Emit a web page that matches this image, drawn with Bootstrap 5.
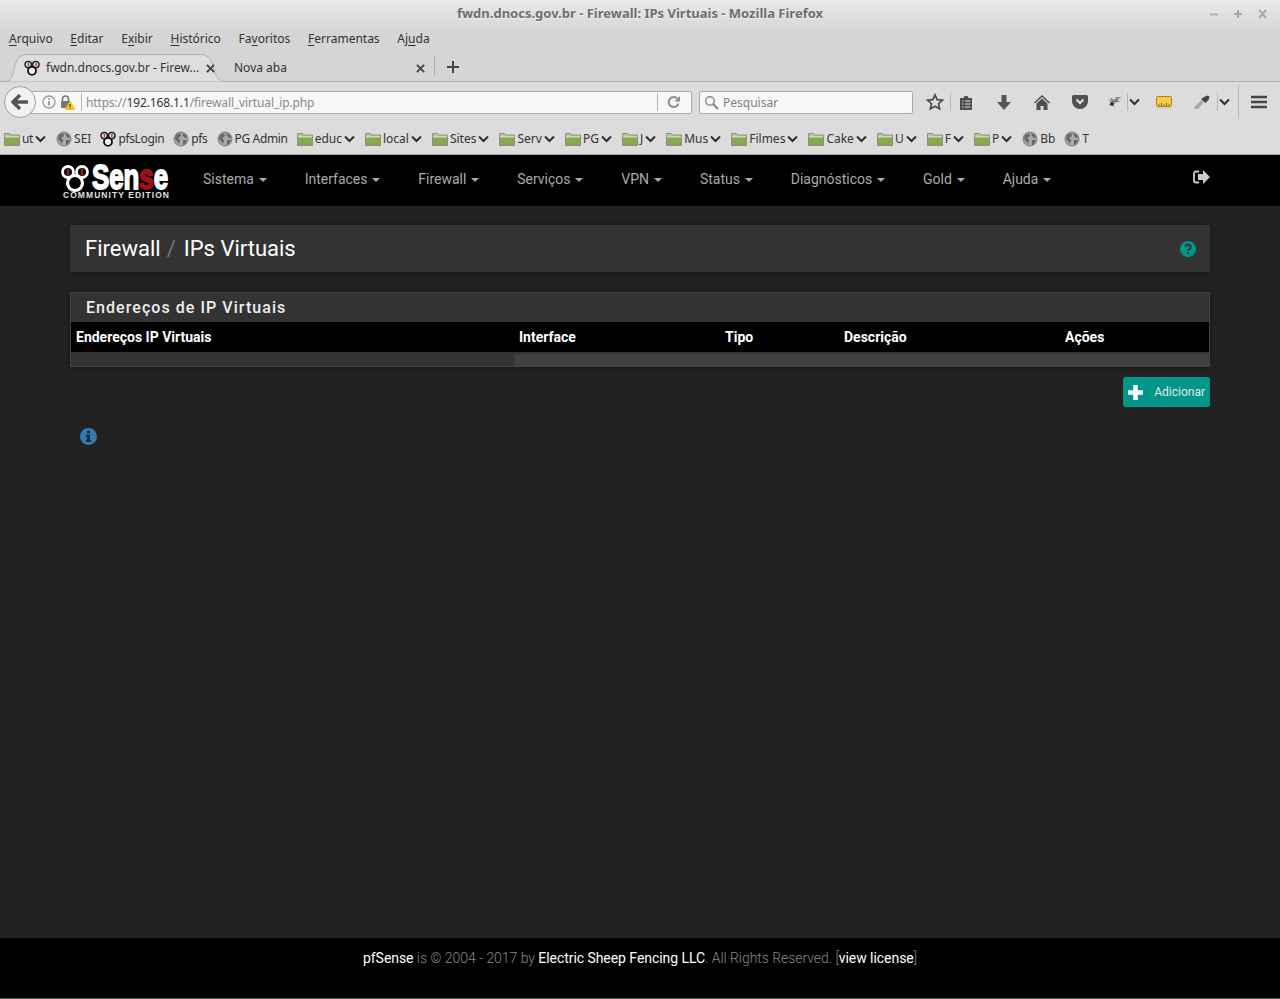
<!DOCTYPE html>
<html lang="pt-BR">

<head>
    <meta charset="UTF-8">
    <meta name="viewport" content="width=device-width, initial-scale=1.0">
    <title>fwdn.dnocs.gov.br - Firewall: IPs Virtuais</title>
    <link href="https://cdn.jsdelivr.net/npm/bootstrap@5.3.0/dist/css/bootstrap.min.css" rel="stylesheet">
    <style>
        body {
            min-height: 999px;
            background: #222;
            font-family: Roboto, "Liberation Sans", sans-serif;
            font-size: 14px;
            color: #bbb;
            overflow: hidden;
        }

        /* browser chrome */
        .ff-chrome {
            height: 155px;
            background: linear-gradient(#e9e9e9 0, #d5d5d5 34px, #d5d5d5 81px, #dcdcdc 82px);
            border-bottom: 1px solid #a3a3a3;
            font-family: "Noto Sans", sans-serif;
            font-size: 12px;
            color: #333;
        }

        .ff-title {
            height: 28px;
            font-size: 13px;
            font-weight: 700;
            color: #6e6e6e;
            text-shadow: 0 1px 0 #f2f2f2;
        }

        .ff-winbtns {
            right: 11px;
            top: 8px;
        }

        .ff-menu {
            height: 22px;
            padding-left: 9px;
            gap: 17.7px;
        }

        .ff-menu u {
            text-underline-offset: 2px;
        }

        .ff-tabs {
            height: 32px;
            border-bottom: 1px solid #adadad;
        }

        .ff-tab-on {
            width: 214px;
            height: 28px;
            margin-left: 14px;
            padding-left: 10px;
            padding-top: 2px;
        }

        .ff-tab-on svg.ff-tabshape {
            left: -14px;
            top: 0;
        }

        .ff-tab-on>*:not(.ff-tabshape) {
            position: relative;
        }

        .ff-tabtext {
            margin-left: 6px;
        }

        .ff-tabx {
            margin-right: 13px;
        }

        .ff-tab-off {
            width: 191px;
            height: 28px;
            margin-left: 6px;
            padding-top: 2px;
        }

        .ff-tabsep {
            width: 1px;
            height: 21px;
            background: #b0b0b0;
            margin-left: 9px;
        }

        .ff-plus {
            margin: 2px 0 0 8px;
        }

        .ff-nav {
            height: 40px;
            padding-left: 4px;
        }

        .ff-back {
            width: 32px;
            height: 32px;
            border: 1px solid #a0a0a0;
            border-radius: 50%;
            background: #f2f2f2;
            position: relative;
            z-index: 1;
        }

        .ff-url {
            width: 672px;
            height: 23px;
            margin-left: -16px;
            padding-left: 21px;
            background: #f7f7f7;
            border: 1px solid #ababab;
            border-radius: 2px;
            font-size: 12px;
            letter-spacing: -0.12px;
            color: #8a8a8a;
        }

        .ff-url b {
            font-weight: 400;
            color: #333;
        }

        .ff-lock {
            margin-left: 4px;
        }

        .ff-urlsep {
            margin-left: 6px;
        }

        .ff-urltext {
            margin-left: 4px;
            padding-top: 2px;
        }

        .ff-reload {
            margin: 0 10px 0 9px;
        }

        .ff-sep {
            width: 1px;
            height: 18px;
            background: #b5b5b5;
            flex: none;
        }

        .ff-sep-tall {
            height: 34px;
        }

        .ff-search {
            width: 214px;
            height: 23px;
            margin-left: 7px;
            padding-left: 4px;
            background: #f7f7f7;
            border: 1px solid #ababab;
            border-radius: 2px;
            color: #808080;
        }

        .ff-searchtext {
            margin-left: 4px;
            padding-top: 2px;
        }

        .ff-star {
            margin: 0 6px 0 13px;
        }

        .ff-ico {
            height: 24px;
            flex: none;
        }

        .w-30 { width: 30px; }
        .w-38 { width: 38px; }
        .w-28 { width: 28px; }
        .w-34 { width: 34px; }
        .w-12 { width: 12px; }
        .w-40 { width: 40px; }

        .ff-ruler {
            margin-left: 5px;
        }

        .ff-marks {
            height: 32px;
            padding: 2px 0 0 4px;
        }

        .ff-mark {
            gap: 2px;
            margin-right: 9px;
        }

        .ff-mark.ff-folder {
            margin-right: 10px;
        }

        .ff-tight {
            letter-spacing: -0.35px;
        }

        /* pfSense page */
        .container {
            max-width: 1170px;
            padding-left: 15px;
            padding-right: 15px;
        }

        .pf-navbar {
            height: 51px;
            padding: 0;
            background: #000;
        }

        .pf-navbar .pf-brand {
            margin: 0 10px 0 -10px;
            padding: 0;
            line-height: 0;
        }

        .pf-navbar .navbar-nav .nav-link {
            padding: 14px 19px 17px;
            font-size: 14px;
            line-height: 20px;
            color: #aaa;
        }

        .pf-navbar .dropdown-toggle::after {
            margin-left: 4.8px;
            vertical-align: 2px;
            border-top-width: 4px;
            border-left-width: 4px;
            border-right-width: 4px;
        }

        .pf-logout {
            margin-bottom: 7px;
        }

        .pf-crumbs {
            height: 47px;
            margin-top: 19px;
            padding: 0 14px 0 15px;
            background: #333;
            box-shadow: 0 1px 5px rgba(0, 0, 0, .4);
        }

        .pf-crumbs .breadcrumb {
            font-size: 22px;
            line-height: 47px;
        }

        .pf-crumbs .breadcrumb-item,
        .pf-crumbs .breadcrumb-item a {
            color: #fff;
            text-decoration: none;
        }

        .pf-crumbs .breadcrumb-item+.breadcrumb-item {
            padding-left: 6px;
        }

        .pf-crumbs .breadcrumb-item+.breadcrumb-item::before {
            color: #777;
            padding-right: 8px;
        }

        .pf-panel {
            margin-top: 20px;
            background: #333;
            border: 1px solid #444;
            border-radius: 0;
            box-shadow: 0 1px 4px rgba(0, 0, 0, .35);
        }

        .pf-panel .card-header {
            height: 29px;
            padding: 0 15px;
            background: #333;
            border: 0;
            border-radius: 0;
            font-size: 16px;
            font-weight: 500;
            line-height: 29px;
            letter-spacing: 1.05px;
            color: #eee;
        }

        .pf-panel .table {
            table-layout: fixed;
            margin: 0;
            --bs-table-bg: transparent;
        }

        .pf-col-addr { width: 443px; }
        .pf-col-if { width: 206px; }
        .pf-col-type { width: 119px; }
        .pf-col-desc { width: 221px; }

        .pf-panel th {
            height: 30px;
            padding: 0 5px;
            background: #000;
            border: 0;
            font-size: 14px;
            font-weight: 700;
            line-height: 30px;
            color: #fff;
        }

        .pf-panel td {
            height: 13px;
            padding: 0;
            border: 0;
            border-top: 2px solid #333;
        }

        .pf-panel td.pf-cell-r {
            background: #404040;
        }

        .pf-add {
            width: 87px;
            height: 30px;
            margin-top: 10px;
            padding: 0 5px;
            background: #009688;
            border: 0;
            border-radius: 3px;
            font-size: 12px;
            color: #e6e6e6;
        }

        .pf-add:hover {
            background: #009688;
            color: #e6e6e6;
        }

        .pf-info {
            margin-top: 21px;
            padding-left: 10px;
            line-height: 0;
        }

        .pf-footer {
            height: 61px;
            padding-top: 10px;
            background: #000;
            border-bottom: 1px solid #555;
            font-size: 14px;
            font-weight: 300;
            line-height: 20px;
            letter-spacing: -0.05px;
            color: #888;
        }

        .pf-footer a {
            color: #fff;
            font-weight: 400;
            text-decoration: none;
        }
    </style>
</head>

<body class="d-flex flex-column">

    <!-- shared icons -->
    <svg width="0" height="0" class="position-absolute">
        <symbol id="i-folder" viewBox="0 0 16 14">
            <path d="M0.5 1.5h5l1 1.5h9v10.5h-15z" fill="#bdbdb2" stroke="#8f8f86" />
            <rect x="1" y="4.5" width="14" height="8.5" fill="#86a94f" />
            <rect x="1" y="4" width="14" height="1.5" fill="#cfd8b8" />
        </symbol>
        <symbol id="i-globe" viewBox="0 0 16 16">
            <circle cx="8" cy="8" r="7" fill="#a8a8a8" stroke="#7d7d7d" />
            <path d="M3 4l4-2 1 3-3 2 2 2-1 4-2-3-2-2zM9 2l4 2 1 3-2 0-2-2zM10 9l4 0-2 4-2 1z" fill="#666" />
        </symbol>
        <symbol id="i-chev" viewBox="0 0 11 8">
            <path d="M1 1.5l4.5 4.5 4.5-4.5" fill="none" stroke="#2e2e2e" stroke-width="2" />
        </symbol>
        <symbol id="i-rings" viewBox="0 0 16 16">
            <circle cx="4.2" cy="4.6" r="3.2" fill="#eee" stroke="#222" stroke-width="1.5" />
            <circle cx="11.8" cy="4.6" r="3.2" fill="#eee" stroke="#222" stroke-width="1.5" />
            <circle cx="8" cy="10.8" r="4" fill="#eee" stroke="#111" stroke-width="1.8" />
            <rect x="3.6" y="3" width="1.4" height="3" fill="#b22" />
            <rect x="11.2" y="3" width="1.4" height="3" fill="#b22" />
        </symbol>
        <symbol id="i-x" viewBox="0 0 10 10">
            <path d="M1 1l8 8M9 1l-8 8" stroke="#444" stroke-width="2.2" />
        </symbol>
    </svg>

    <!-- Firefox window -->
    <div class="ff-chrome flex-shrink-0">
        <div class="ff-title position-relative d-flex align-items-center justify-content-center">
            fwdn.dnocs.gov.br - Firewall: IPs Virtuais - Mozilla Firefox
            <svg class="ff-winbtns position-absolute" width="60" height="12" viewBox="0 0 60 12">
                <path d="M1 6.5h8" stroke="#b0b0b0" stroke-width="2" />
                <path d="M25 6h8M29 2v8" stroke="#a8a8a8" stroke-width="2" />
                <path d="M50 2l7 8M57 2l-7 8" stroke="#a8a8a8" stroke-width="2" />
            </svg>
        </div>
        <div class="ff-menu d-flex align-items-center">
            <span><u>A</u>rquivo</span>
            <span><u>E</u>ditar</span>
            <span>E<u>x</u>ibir</span>
            <span><u>H</u>istórico</span>
            <span>Fa<u>v</u>oritos</span>
            <span><u>F</u>erramentas</span>
            <span>Aj<u>u</u>da</span>
        </div>
        <div class="ff-tabs d-flex align-items-end">
            <div class="ff-tab-on position-relative d-flex align-items-center">
                <svg class="ff-tabshape position-absolute" width="240" height="29" viewBox="0 0 240 29">
                    <path d="M0 28.5h4c6 0 8-3 10-12 2-10 5-15 14-15h172c9 0 11 5 14 15 2 8 5 12 12 12h14" fill="#dedede" stroke="#adadad" />
                </svg>
                <svg width="16" height="16"><use href="#i-rings" /></svg>
                <span class="ff-tabtext text-nowrap">fwdn.dnocs.gov.br - Firew...</span>
                <svg class="ff-tabx ms-auto" width="9" height="9"><use href="#i-x" /></svg>
            </div>
            <div class="ff-tab-off d-flex align-items-center">
                <span>Nova aba</span>
                <svg class="ms-auto" width="9" height="9"><use href="#i-x" /></svg>
            </div>
            <span class="ff-tabsep align-self-center"></span>
            <svg class="ff-plus align-self-center" width="20" height="14" viewBox="0 0 20 14">
                <path d="M4 7h12M10 1v12" stroke="#444" stroke-width="2" />
            </svg>
        </div>
        <div class="ff-nav d-flex align-items-center">
            <div class="ff-back d-flex align-items-center justify-content-center flex-shrink-0">
                <svg width="18" height="16" viewBox="0 0 18 16">
                    <path d="M9 1L2 8l7 7M2.5 8H17" fill="none" stroke="#555" stroke-width="3.4" />
                </svg>
            </div>
            <div class="ff-url d-flex align-items-center flex-shrink-0">
                <svg class="flex-shrink-0" width="14" height="14" viewBox="0 0 14 14">
                    <circle cx="7" cy="7" r="6" fill="none" stroke="#999" stroke-width="1.3" />
                    <path d="M7 6v4.5M7 3.2v1.6" stroke="#888" stroke-width="1.6" />
                </svg>
                <svg class="ff-lock flex-shrink-0" width="15" height="15" viewBox="0 0 15 15">
                    <path d="M2.5 6V4a3 3 0 016 0v2" fill="none" stroke="#777" stroke-width="1.6" />
                    <rect x="1" y="6" width="9" height="7" rx="1" fill="#777" />
                    <path d="M10 6l5 8.5H5z" fill="#fc0" stroke="#e0a800" stroke-width=".5" />
                    <path d="M10 9v3M10 12.6v1" stroke="#333" stroke-width="1" />
                </svg>
                <span class="ff-sep ff-urlsep"></span>
                <span class="ff-urltext">https://<b>192.168.1.1</b>/firewall_virtual_ip.php</span>
                <span class="ff-sep ms-auto"></span>
                <svg class="ff-reload flex-shrink-0" width="14" height="14" viewBox="0 0 14 14">
                    <path d="M11.5 8.5a5 5 0 11-1.2-5" fill="none" stroke="#8c8c8c" stroke-width="2" />
                    <path d="M13 1v5.500H7.500z" fill="#8c8c8c" />
                </svg>
            </div>
            <div class="ff-search d-flex align-items-center flex-shrink-0">
                <svg class="flex-shrink-0" width="15" height="15" viewBox="0 0 15 15">
                    <circle cx="6" cy="6" r="4.2" fill="none" stroke="#8a8a8a" stroke-width="1.5" />
                    <path d="M9 9l5 5" stroke="#8a8a8a" stroke-width="2.2" />
                </svg>
                <span class="ff-searchtext">Pesquisar</span>
            </div>
            <svg class="ff-star flex-shrink-0" width="18" height="18" viewBox="0 0 18 18">
                <path d="M9 1.8l2.2 4.8 5.2.6-3.9 3.500 1.100 5.200L9 13.300l-4.600 2.600 1.100-5.200-3.900-3.500 5.200-.6z" fill="none" stroke="#4a4a4a" stroke-width="1.7" />
            </svg>
            <span class="ff-sep"></span>
            <div class="ff-ico w-30 d-flex align-items-center justify-content-center">
                <svg width="14" height="15" viewBox="0 0 14 15">
                    <path d="M1 3h3.500l1-2h3l1 2H13v12H1z" fill="#4d4d4d" />
                    <path d="M3 6h1.500M6 6h5.500M3 9h1.500M6 9h5.500M3 12h1.500M6 12h5.500" stroke="#ddd" stroke-width="1.2" />
                </svg>
            </div>
            <div class="ff-ico w-38 ms-1 d-flex align-items-center justify-content-center">
                <svg width="14" height="15" viewBox="0 0 14 15">
                    <path d="M4.500 0h5v7H14l-7 8-7-8h4.500z" fill="#555" />
                </svg>
            </div>
            <div class="ff-ico w-38 d-flex align-items-center justify-content-center">
                <svg width="16" height="15" viewBox="0 0 16 15">
                    <path d="M8 0L0 7.500l1 1L8 2l7 6.500 1-1z" fill="#505050" />
                    <path d="M8 3.500l-5.500 5V15H6.500v-4h3v4h4V8.500z" fill="#505050" />
                </svg>
            </div>
            <div class="ff-ico w-38 d-flex align-items-center justify-content-center">
                <svg width="16" height="14" viewBox="0 0 16 14">
                    <path d="M1.500 0h13A1.500 1.500 0 0116 1.500V6A8 8 0 010 6V1.500A1.500 1.500 0 011.500 0z" fill="#505050" />
                    <path d="M4.500 4.500L8 8l3.500-3.500" fill="none" stroke="#e6e6e6" stroke-width="2" />
                </svg>
            </div>
            <div class="ff-ico w-28 ps-1 d-flex align-items-center justify-content-center">
                <svg width="16" height="13" viewBox="0 0 15 13">
                    <path d="M1 3l4 2 4-4 5 0-4 3 3 2-5 0-2 3 2 3-4-3-3 1 2-3z" fill="#8f8f8f" />
                    <circle cx="4.500" cy="8" r="1.800" fill="#222" />
                    <path d="M9 3l1 1M7 5l2 1M4 2l1 3" stroke="#444" />
                </svg>
            </div>
            <span class="ff-sep"></span>
            <div class="ff-ico w-12 d-flex align-items-center justify-content-center">
                <svg width="11" height="8"><use href="#i-chev" /></svg>
            </div>
            <div class="ff-ico w-38 ff-ruler d-flex align-items-center justify-content-center">
                <svg width="16" height="13" viewBox="0 0 16 13">
                    <rect x=".5" y=".5" width="15" height="10" rx="1" fill="#f7c948" stroke="#a98320" />
                    <path d="M3 10.500V8M5.500 10.500V7M8 10.500V8M10.500 10.500V7M13 10.500V8" stroke="#8a6a1a" />
                    <path d="M1 12.500h14" stroke="#c9c9c9" />
                </svg>
            </div>
            <div class="ff-ico w-34 ps-1 d-flex align-items-center justify-content-center">
                <svg width="18" height="15" viewBox="0 0 18 15">
                    <path d="M1 14l1-3L9 5l2 2-6 7z" fill="#a8a8a8" />
                    <path d="M8 4l4-2.500 3-1 1.500 1.500-1 3-3 3z" fill="#444" />
                </svg>
            </div>
            <span class="ff-sep"></span>
            <div class="ff-ico w-12 d-flex align-items-center justify-content-center">
                <svg width="11" height="8"><use href="#i-chev" /></svg>
            </div>
            <span class="ff-sep ff-sep-tall ms-2"></span>
            <div class="ff-ico w-40 d-flex align-items-center justify-content-center">
                <svg width="16" height="14" viewBox="0 0 16 14">
                    <path d="M0 2h16M0 7h16M0 12h16" stroke="#444" stroke-width="2.600" />
                </svg>
            </div>
        </div>
        <div class="ff-marks d-flex align-items-center text-nowrap">
            <div class="ff-mark ff-folder d-flex align-items-center"><svg width="16" height="14"><use href="#i-folder" /></svg><span class="ff-tight">ut</span><svg width="11" height="8"><use href="#i-chev" /></svg></div>
            <div class="ff-mark d-flex align-items-center"><svg width="16" height="16"><use href="#i-globe" /></svg><span>SEI</span></div>
            <div class="ff-mark d-flex align-items-center"><svg width="16" height="16"><use href="#i-rings" /></svg><span class="ff-tight">pfsLogin</span></div>
            <div class="ff-mark d-flex align-items-center"><svg width="16" height="16"><use href="#i-globe" /></svg><span class="ff-tight">pfs</span></div>
            <div class="ff-mark d-flex align-items-center"><svg width="16" height="16"><use href="#i-globe" /></svg><span class="ff-tight">PG Admin</span></div>
            <div class="ff-mark ff-folder d-flex align-items-center"><svg width="16" height="14"><use href="#i-folder" /></svg><span>educ</span><svg width="11" height="8"><use href="#i-chev" /></svg></div>
            <div class="ff-mark ff-folder d-flex align-items-center"><svg width="16" height="14"><use href="#i-folder" /></svg><span>local</span><svg width="11" height="8"><use href="#i-chev" /></svg></div>
            <div class="ff-mark ff-folder d-flex align-items-center"><svg width="16" height="14"><use href="#i-folder" /></svg><span>Sites</span><svg width="11" height="8"><use href="#i-chev" /></svg></div>
            <div class="ff-mark ff-folder d-flex align-items-center"><svg width="16" height="14"><use href="#i-folder" /></svg><span>Serv</span><svg width="11" height="8"><use href="#i-chev" /></svg></div>
            <div class="ff-mark ff-folder d-flex align-items-center"><svg width="16" height="14"><use href="#i-folder" /></svg><span>PG</span><svg width="11" height="8"><use href="#i-chev" /></svg></div>
            <div class="ff-mark ff-folder d-flex align-items-center"><svg width="16" height="14"><use href="#i-folder" /></svg><span>J</span><svg width="11" height="8"><use href="#i-chev" /></svg></div>
            <div class="ff-mark ff-folder d-flex align-items-center"><svg width="16" height="14"><use href="#i-folder" /></svg><span>Mus</span><svg width="11" height="8"><use href="#i-chev" /></svg></div>
            <div class="ff-mark ff-folder d-flex align-items-center"><svg width="16" height="14"><use href="#i-folder" /></svg><span>Filmes</span><svg width="11" height="8"><use href="#i-chev" /></svg></div>
            <div class="ff-mark ff-folder d-flex align-items-center"><svg width="16" height="14"><use href="#i-folder" /></svg><span>Cake</span><svg width="11" height="8"><use href="#i-chev" /></svg></div>
            <div class="ff-mark ff-folder d-flex align-items-center"><svg width="16" height="14"><use href="#i-folder" /></svg><span>U</span><svg width="11" height="8"><use href="#i-chev" /></svg></div>
            <div class="ff-mark ff-folder d-flex align-items-center"><svg width="16" height="14"><use href="#i-folder" /></svg><span>F</span><svg width="11" height="8"><use href="#i-chev" /></svg></div>
            <div class="ff-mark ff-folder d-flex align-items-center"><svg width="16" height="14"><use href="#i-folder" /></svg><span>P</span><svg width="11" height="8"><use href="#i-chev" /></svg></div>
            <div class="ff-mark d-flex align-items-center"><svg width="16" height="16"><use href="#i-globe" /></svg><span>Bb</span></div>
            <div class="ff-mark d-flex align-items-center"><svg width="16" height="16"><use href="#i-globe" /></svg><span>T</span></div>
        </div>
    </div>

    <!-- pfSense navbar -->
    <nav class="navbar navbar-expand pf-navbar flex-shrink-0">
        <div class="container">
            <a class="navbar-brand pf-brand" href="#">
                <svg width="114" height="50" viewBox="0 0 114 50">
                    <circle cx="8" cy="16" r="5.500" fill="#111" stroke="#fff" stroke-width="2.800" />
                    <circle cx="22" cy="16" r="5.500" fill="#111" stroke="#fff" stroke-width="2.800" />
                    <circle cx="15" cy="27" r="7.500" fill="#000" stroke="#fff" stroke-width="3.200" />
                    <rect x="7" y="13" width="2" height="6" fill="#a11" />
                    <rect x="21" y="13" width="2" height="6" fill="#a11" />
                    <text transform="translate(32 33) scale(.717 1)" font-family="Liberation Sans" font-weight="700" font-size="36" fill="#fff" stroke="#fff" stroke-width="1.800">Sen<tspan fill="#a01010" stroke="#a01010">s</tspan>e</text>
                    <text x="3" y="42" font-family="Liberation Sans" font-weight="700" font-size="8.500" fill="#e2e2e2" textLength="106" lengthAdjust="spacing">COMMUNITY EDITION</text>
                </svg>
            </a>
            <ul class="navbar-nav">
                <li class="nav-item dropdown"><a class="nav-link dropdown-toggle" href="#">Sistema</a></li>
                <li class="nav-item dropdown"><a class="nav-link dropdown-toggle" href="#">Interfaces</a></li>
                <li class="nav-item dropdown"><a class="nav-link dropdown-toggle" href="#">Firewall</a></li>
                <li class="nav-item dropdown"><a class="nav-link dropdown-toggle" href="#">Serviços</a></li>
                <li class="nav-item dropdown"><a class="nav-link dropdown-toggle" href="#">VPN</a></li>
                <li class="nav-item dropdown"><a class="nav-link dropdown-toggle" href="#">Status</a></li>
                <li class="nav-item dropdown"><a class="nav-link dropdown-toggle" href="#">Diagnósticos</a></li>
                <li class="nav-item dropdown"><a class="nav-link dropdown-toggle" href="#">Gold</a></li>
                <li class="nav-item dropdown"><a class="nav-link dropdown-toggle" href="#">Ajuda</a></li>
            </ul>
            <a class="pf-logout ms-auto d-flex" href="#">
                <svg width="17" height="14" viewBox="0 0 17 14">
                    <path d="M6 1.500H3A2 2 0 001 3.500v7a2 2 0 002 2h3" fill="none" stroke="#ccc" stroke-width="1.800" />
                    <path d="M10 0l7 7-7 7v-4H5V4h5z" fill="#ccc" />
                </svg>
            </a>
        </div>
    </nav>

    <!-- page content -->
    <main class="container flex-grow-1">
        <div class="pf-crumbs d-flex align-items-center justify-content-between">
            <ol class="breadcrumb mb-0">
                <li class="breadcrumb-item"><a href="#">Firewall</a></li>
                <li class="breadcrumb-item active">IPs Virtuais</li>
            </ol>
            <a href="#" class="d-flex">
                <svg width="16" height="16" viewBox="0 0 16 16">
                    <circle cx="8" cy="8" r="8" fill="#009688" />
                    <path d="M5.300 6.200C5.300 4.600 6.500 3.700 8 3.700c1.600 0 2.800.9 2.800 2.300 0 2-2.400 2-2.400 3.700" fill="none" stroke="#1f3a37" stroke-width="2" />
                    <rect x="7" y="11" width="2.200" height="2.200" fill="#1f3a37" />
                </svg>
            </a>
        </div>

        <div class="card pf-panel">
            <div class="card-header">Endereços de IP Virtuais</div>
            <table class="table">
                <colgroup>
                    <col class="pf-col-addr">
                    <col class="pf-col-if">
                    <col class="pf-col-type">
                    <col class="pf-col-desc">
                    <col>
                </colgroup>
                <thead>
                    <tr>
                        <th>Endereços IP Virtuais</th>
                        <th>Interface</th>
                        <th>Tipo</th>
                        <th>Descrição</th>
                        <th>Ações</th>
                    </tr>
                </thead>
                <tbody>
                    <tr>
                        <td></td>
                        <td class="pf-cell-r" colspan="4"></td>
                    </tr>
                </tbody>
            </table>
        </div>

        <div class="d-flex justify-content-end">
            <a href="#" class="btn pf-add d-flex align-items-center justify-content-between">
                <svg width="15" height="15" viewBox="0 0 15 15">
                    <path d="M5.200 0h4.600v5.200H15v4.600H9.800V15H5.200V9.800H0V5.200h5.200z" fill="#fff" />
                </svg>
                <span>Adicionar</span>
            </a>
        </div>

        <div class="pf-info">
            <svg width="17" height="17" viewBox="0 0 17 17">
                <circle cx="8.500" cy="8.500" r="8.500" fill="#337ab7" />
                <path d="M7 2.800h3v2.400H7zM5.800 6.800H10v5.200h1.200v2H5.800v-2H7V8.800H5.800z" fill="#1d2a36" />
            </svg>
        </div>
    </main>

    <!-- footer -->
    <footer class="pf-footer text-center flex-shrink-0">
        <a href="#">pfSense</a> is © 2004 - 2017 by <a href="#">Electric Sheep Fencing LLC</a>. All Rights Reserved. [<a href="#">view license</a>]
    </footer>

    <script src="https://cdn.jsdelivr.net/npm/bootstrap@5.3.0/dist/js/bootstrap.bundle.min.js"></script>
</body>

</html>
